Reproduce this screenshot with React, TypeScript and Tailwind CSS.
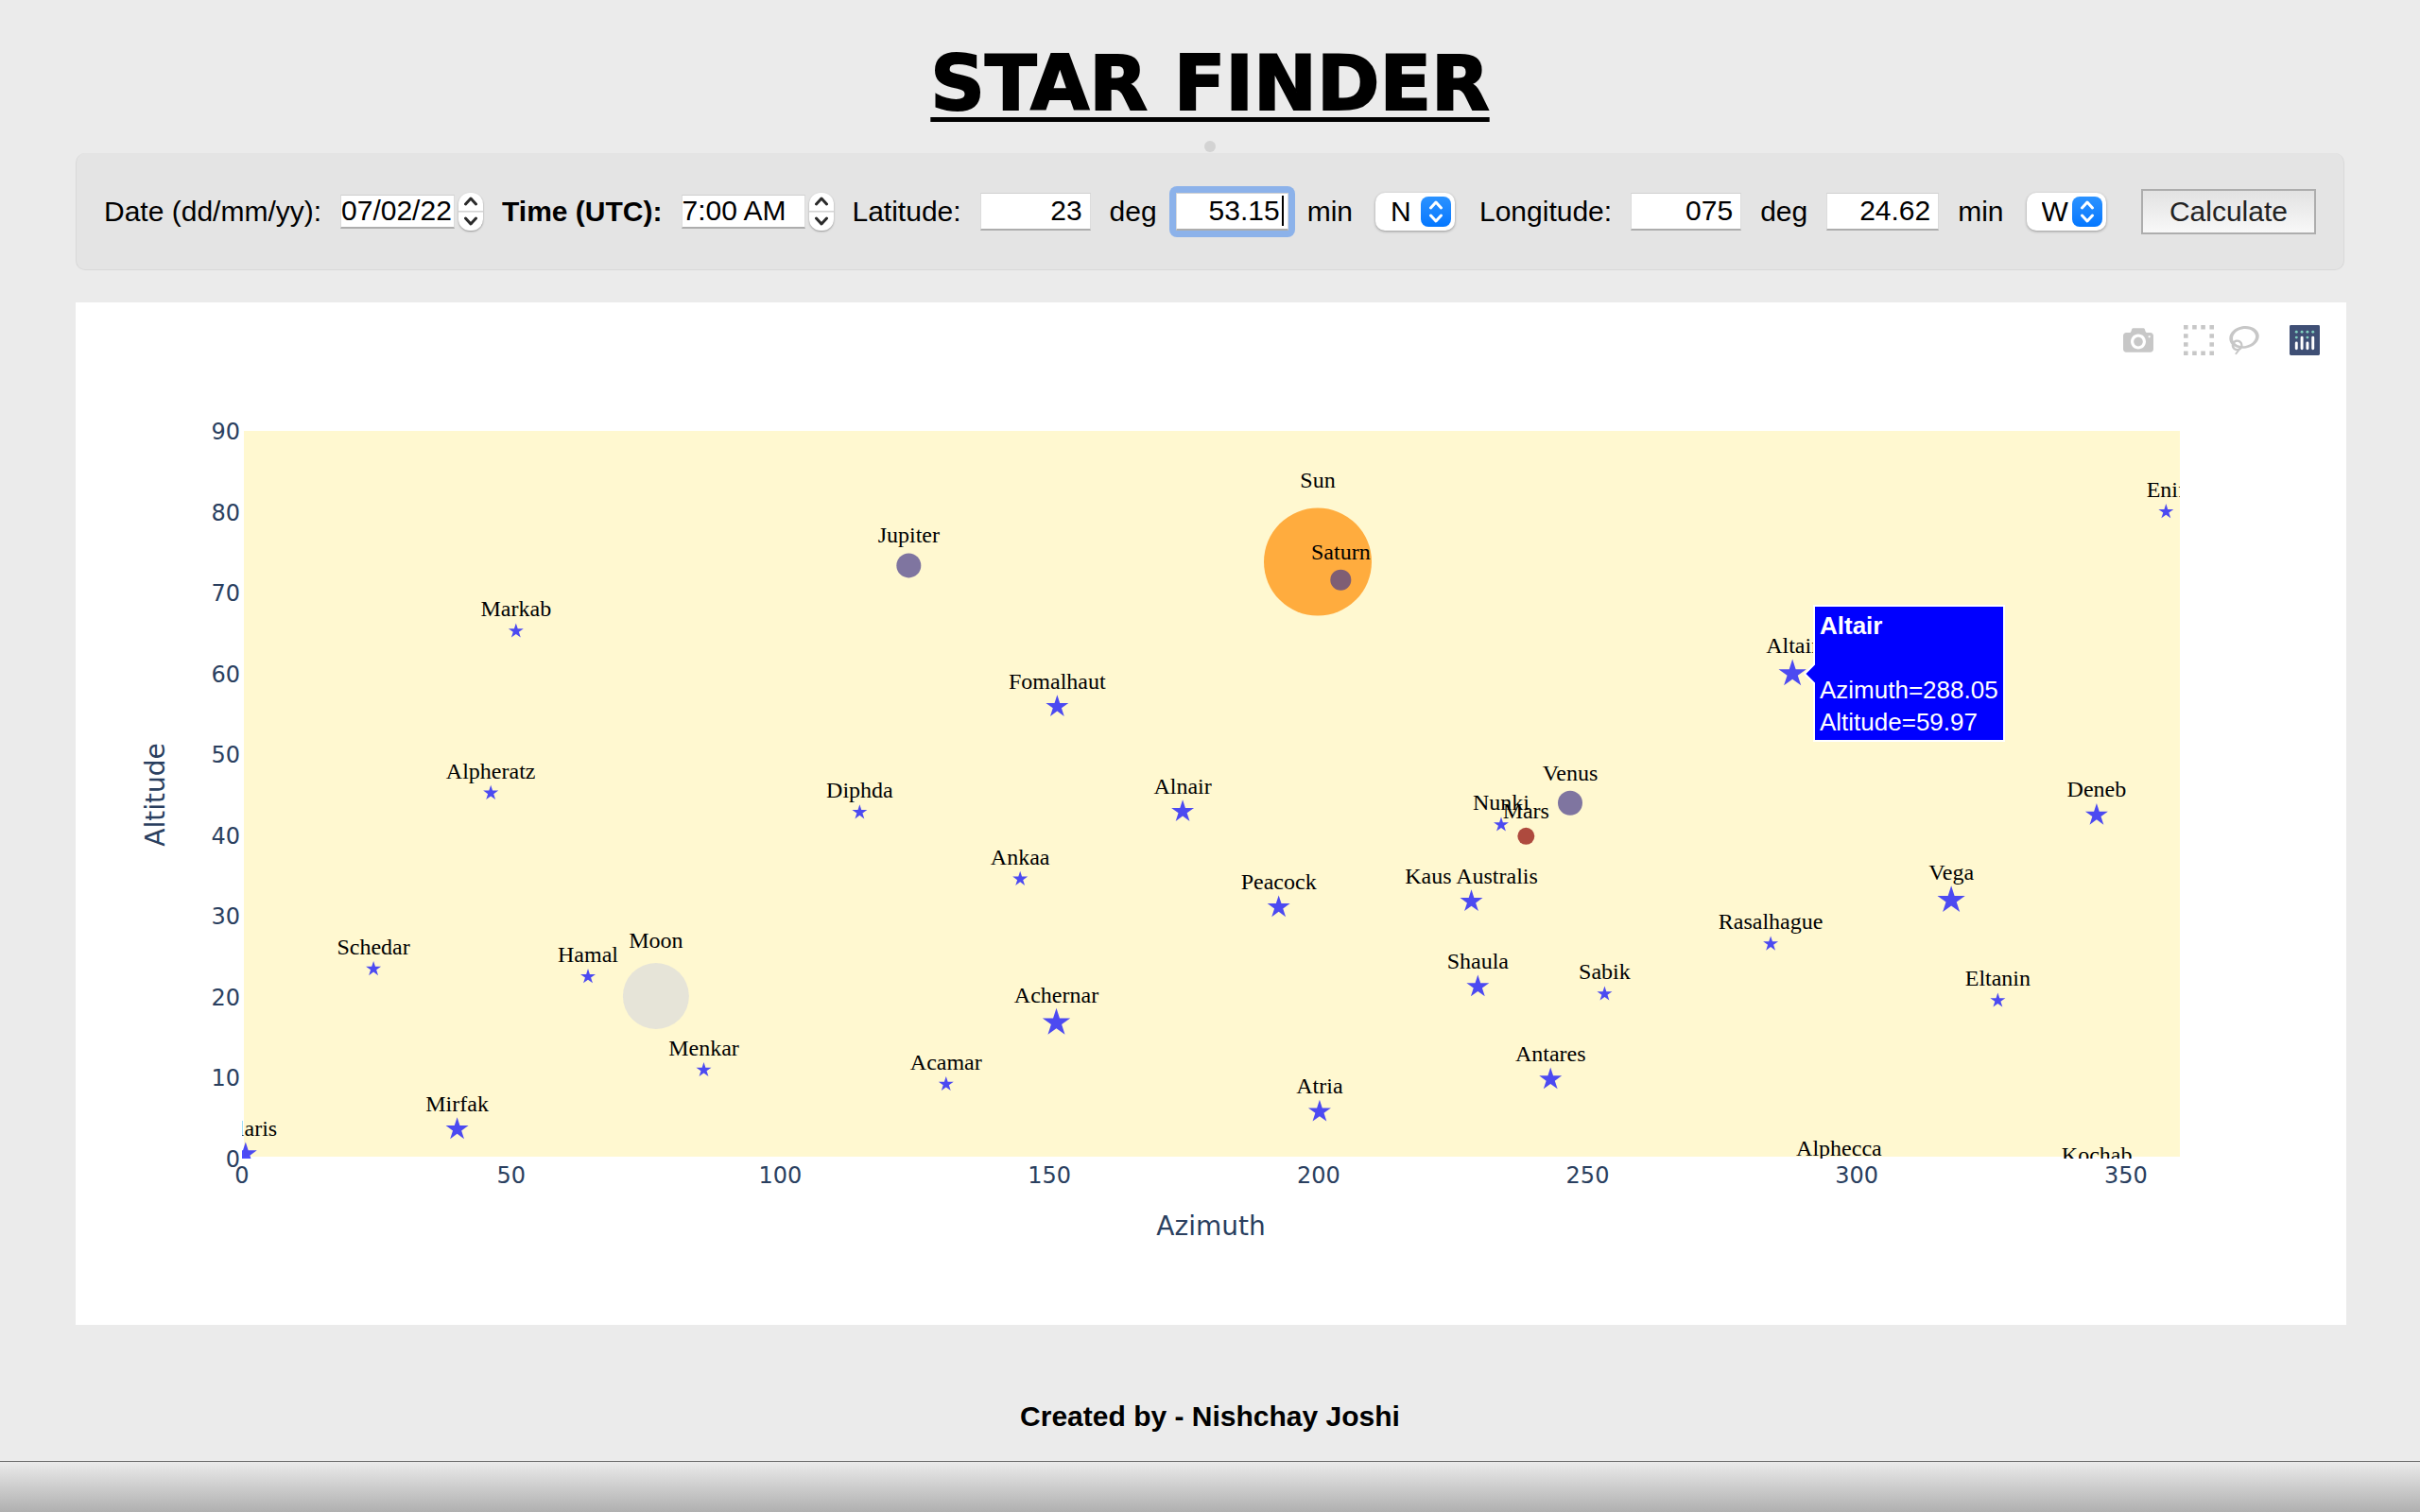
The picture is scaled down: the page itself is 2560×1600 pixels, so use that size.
import React from "react";

type Kind = "small" | "mid" | "large";

const STAR_RADIUS: Record<Kind, number> = { small: 6, mid: 9, large: 11 };

const stars: { name: string; az: number; alt: number; kind: Kind }[] = [
  { name: "Polaris", az: 0.67, alt: 0.56, kind: "mid" },
  { name: "Schedar", az: 24.43, alt: 23.45, kind: "small" },
  { name: "Mirfak", az: 39.97, alt: 3.63, kind: "mid" },
  { name: "Alpheratz", az: 46.22, alt: 45.21, kind: "small" },
  { name: "Markab", az: 50.9, alt: 65.24, kind: "small" },
  { name: "Hamal", az: 64.28, alt: 22.5, kind: "small" },
  { name: "Menkar", az: 85.79, alt: 10.95, kind: "small" },
  { name: "Diphda", az: 114.75, alt: 42.82, kind: "small" },
  { name: "Acamar", az: 130.8, alt: 9.2, kind: "small" },
  { name: "Ankaa", az: 144.57, alt: 34.58, kind: "small" },
  { name: "Achernar", az: 151.3, alt: 16.8, kind: "large" },
  { name: "Fomalhaut", az: 151.45, alt: 55.89, kind: "mid" },
  { name: "Alnair", az: 174.76, alt: 42.92, kind: "mid" },
  { name: "Peacock", az: 192.6, alt: 31.09, kind: "mid" },
  { name: "Atria", az: 200.2, alt: 5.8, kind: "mid" },
  { name: "Kaus Australis", az: 228.4, alt: 31.8, kind: "mid" },
  { name: "Shaula", az: 229.6, alt: 21.26, kind: "mid" },
  { name: "Nunki", az: 233.93, alt: 41.28, kind: "small" },
  { name: "Antares", az: 243.1, alt: 9.8, kind: "mid" },
  { name: "Sabik", az: 253.15, alt: 20.36, kind: "small" },
  { name: "Rasalhague", az: 284, alt: 26.55, kind: "small" },
  { name: "Altair", az: 288.05, alt: 59.97, kind: "large" },
  { name: "Alphecca", az: 296.7, alt: -1.42, kind: "small" },
  { name: "Vega", az: 317.55, alt: 31.95, kind: "large" },
  { name: "Eltanin", az: 326.2, alt: 19.54, kind: "small" },
  { name: "Deneb", az: 344.56, alt: 42.48, kind: "mid" },
  { name: "Kochab", az: 344.6, alt: -2.75, kind: "mid" },
  { name: "Enif", az: 357.45, alt: 80, kind: "small" },
];

const bodies = [
  { name: "Sun", az: 199.86, alt: 73.8, r: 57, fill: "#ff8c00" },
  { name: "Moon", az: 76.9, alt: 20.1, r: 35, fill: "#dcdcdc" },
  { name: "Jupiter", az: 123.87, alt: 73.35, r: 13, fill: "#483d8b" },
  { name: "Saturn", az: 204.13, alt: 71.57, r: 11, fill: "#483d8b" },
  { name: "Mars", az: 238.55, alt: 39.88, r: 9, fill: "#8b0000" },
  { name: "Venus", az: 246.75, alt: 43.98, r: 13, fill: "#483d8b" },
];

// Chart space: 2402 x 1082 units, origin at the panel's top left corner.
const toX = (az: number) => 176 + az * 5.694;
const toY = (alt: number) => 906 - alt * 8.556;
const labelLift = (r: number) => r * 1.23 + 8;

function starPoints(cx: number, cy: number, r: number) {
  const outer = r * 1.4;
  const inner = outer * 0.382;
  return Array.from({ length: 10 }, (_, i) => {
    const rad = i % 2 === 0 ? outer : inner;
    const a = (Math.PI / 5) * i - Math.PI / 2;
    return `${(cx + rad * Math.cos(a)).toFixed(2)},${(cy + rad * Math.sin(a)).toFixed(2)}`;
  }).join(" ");
}

function SkyChart() {
  const altTicks = [0, 10, 20, 30, 40, 50, 60, 70, 80, 90];
  const azTicks = [0, 50, 100, 150, 200, 250, 300, 350];
  return (
    <svg viewBox="0 0 2402 1082" className="block w-full" role="img" aria-label="Altitude against azimuth">
      <defs>
        <clipPath id="plot-area">
          <rect x="176" y="136" width="2050" height="770" />
        </clipPath>
      </defs>
      <rect x="178" y="136" width="2048" height="768" fill="#fff8d0" />
      <g className="fill-[#2a3f5f] font-['DejaVu_Sans',sans-serif] text-[24px]">
        {altTicks.map((t) => (
          <text key={t} x="174" y={toY(t) + 9} textAnchor="end">{t}</text>
        ))}
        {azTicks.map((t) => (
          <text key={t} x={toX(t)} y="932" textAnchor="middle">{t}</text>
        ))}
      </g>
      <g className="fill-[#2a3f5f] font-['DejaVu_Sans',sans-serif] text-[28px]">
        <text x="1201" y="987" textAnchor="middle">Azimuth</text>
        <text transform="translate(94 521) rotate(-90)" textAnchor="middle">Altitude</text>
      </g>
      <g clipPath="url(#plot-area)">
        {bodies.map((b) => (
          <circle key={b.name} cx={toX(b.az)} cy={toY(b.alt)} r={b.r} fill={b.fill} opacity="0.7" />
        ))}
        {stars.map((s) => (
          <polygon key={s.name} points={starPoints(toX(s.az), toY(s.alt), STAR_RADIUS[s.kind])} fill="#0000ff" opacity="0.7" />
        ))}
        <g className="fill-black font-['Liberation_Serif',serif] text-[24px]">
          {bodies.map((b) => (
            <text key={b.name} x={toX(b.az)} y={toY(b.alt) - labelLift(b.r)} textAnchor="middle">{b.name}</text>
          ))}
          {stars.map((s) => (
            <text key={s.name} x={toX(s.az)} y={toY(s.alt) - labelLift(STAR_RADIUS[s.kind])} textAnchor="middle">{s.name}</text>
          ))}
        </g>
      </g>
      <g className="font-['Liberation_Sans',sans-serif] text-[26px]">
        <path d="M1829 393l10-10v-62h201v143h-201v-61z" fill="#0000ff" stroke="#ffffff" strokeWidth="2" />
        <g fill="#ffffff">
          <text x="1845" y="351" className="font-bold">Altair</text>
          <text x="1845" y="419">Azimuth=288.05</text>
          <text x="1845" y="453">Altitude=59.97</text>
        </g>
      </g>
    </svg>
  );
}

const CAMERA =
  "m500 450c-83 0-150-67-150-150 0-83 67-150 150-150 83 0 150 67 150 150 0 83-67 150-150 150z m400 150h-120c-16 0-34 13-39 29l-31 93c-6 15-23 28-40 28h-340c-16 0-34-13-39-28l-31-94c-6-15-23-28-40-28h-120c-55 0-100-45-100-100v-450c0-55 45-100 100-100h800c55 0 100 45 100 100v450c0 55-45 100-100 100z m-400-550c-138 0-250 112-250 250 0 138 112 250 250 250 138 0 250-112 250-250 0-138-112-250-250-250z m365 380c-19 0-35 16-35 35 0 19 16 35 35 35 19 0 35-16 35-35 0-19-16-35-35-35z";
const BOX =
  "m0 850l0-143 143 0 0 143-143 0z m286 0l0-143 143 0 0 143-143 0z m285 0l0-143 143 0 0 143-143 0z m286 0l0-143 143 0 0 143-143 0z m-857-286l0-143 143 0 0 143-143 0z m857 0l0-143 143 0 0 143-143 0z m-857-285l0-143 143 0 0 143-143 0z m857 0l0-143 143 0 0 143-143 0z m-857-286l0-143 143 0 0 143-143 0z m286 0l0-143 143 0 0 143-143 0z m285 0l0-143 143 0 0 143-143 0z m286 0l0-143 143 0 0 143-143 0z";
const LASSO =
  "m1018 538c-36 207-290 336-568 286-277-48-473-256-436-463 10-57 36-108 76-151-13-66 11-137 68-183 34-28 75-41 114-42l-55-70 0 0c-2-1-3-2-4-3-10-14-8-34 5-45 14-11 34-8 45 4 1 1 2 3 2 5l0 0 113 140c16 11 31 24 45 40 4 3 6 7 8 11 48-3 100 0 151 9 278 48 473 255 436 462z m-624-379c-80 14-149 48-197 96 42 42 109 47 156 9 33-26 47-66 41-105z m-187-74c-19 16-33 37-39 60 50-32 109-55 174-68-42-25-95-24-135 8z m360 75c-34-7-69-9-102-8 8 62-16 128-68 170-73 59-175 54-244-5-9 20-16 40-20 61-28 159 121 317 333 354s407-60 434-217c28-159-121-318-333-355z";

function ModeButton({ label, d, width = 1000 }: { label: string; d: string; width?: number }) {
  return (
    <button type="button" aria-label={label} className="size-8">
      <svg viewBox={`0 0 ${width} 1000`} className="size-8 fill-[#c7c7c7]">
        <path transform="matrix(1 0 0 -1 0 850)" d={d} />
      </svg>
    </button>
  );
}

function ModeBar() {
  return (
    <div className="absolute top-6 right-7 flex">
      <ModeButton label="Download plot as a png" d={CAMERA} />
      <div className="ml-8 flex gap-4">
        <ModeButton label="Box Select" d={BOX} />
        <ModeButton label="Lasso Select" d={LASSO} width={1031} />
      </div>
      <a href="#plotly" aria-label="Produced with Plotly" className="ml-8 size-8">
        <svg viewBox="0 0 132 132" className="size-8">
          <rect width="132" height="132" rx="6" fill="#3f4f75" />
          <g fill="#80cfbe">
            <circle cx="30" cy="30" r="6" />
            <circle cx="54" cy="30" r="6" />
            <circle cx="78" cy="30" r="6" />
            <circle cx="102" cy="30" r="6" />
            <circle cx="30" cy="54" r="6" />
            <circle cx="78" cy="54" r="6" />
          </g>
          <g fill="#ffffff">
            <rect x="24" y="72" width="12" height="36" rx="6" />
            <rect x="48" y="48" width="12" height="60" rx="6" />
            <rect x="72" y="72" width="12" height="36" rx="6" />
            <rect x="96" y="48" width="12" height="60" rx="6" />
          </g>
        </svg>
      </a>
    </div>
  );
}

function Chevron({ down = false, className }: { down?: boolean; className: string }) {
  return (
    <svg viewBox="0 0 16 10" className={className} fill="none" strokeWidth="3" strokeLinecap="round" strokeLinejoin="round">
      <path d={down ? "M2.500 2l5.500 6 5.500-6" : "M2.500 8l5.500-6 5.500 6"} />
    </svg>
  );
}

function Stepper({ name }: { name: string }) {
  return (
    <span className="flex h-10 w-[26px] shrink-0 flex-col overflow-hidden rounded-[12px] bg-white shadow-[0_1px_2px_rgba(0,0,0,0.35)]">
      <button type="button" aria-label={`Increase ${name}`} className="flex flex-1 items-center justify-center border-b border-[#d4d4d4]">
        <Chevron className="w-4 stroke-[#2b2b2b]" />
      </button>
      <button type="button" aria-label={`Decrease ${name}`} className="flex flex-1 items-center justify-center border-t border-[#e6e6e6]">
        <Chevron down className="w-4 stroke-[#2b2b2b]" />
      </button>
    </span>
  );
}

const field = "border border-t-[#cfcfcf] border-b-2 border-x-[#dcdcdc] border-b-[#adadad] bg-white outline-none";

function SteppedField({ id, label, value, bold = false, width, name }: { id: string; label: string; value: string; bold?: boolean; width: string; name: string }) {
  return (
    <div className="flex items-center gap-5">
      <label htmlFor={id} className={bold ? "font-bold" : ""}>{label}</label>
      <span className="flex items-center gap-1">
        <input id={id} defaultValue={value} className={`${field} ${width} h-9`} />
        <Stepper name={name} />
      </span>
    </div>
  );
}

function Hemisphere({ id, label, options }: { id: string; label: string; options: string[] }) {
  return (
    <span className="relative mr-1.5 ml-1 flex">
      <select id={id} aria-label={label} className="h-10 w-[84px] appearance-none rounded-[10px] bg-white pl-4 leading-9 shadow-[0_1px_3px_rgba(0,0,0,0.35)] outline-none">
        {options.map((o) => (
          <option key={o}>{o}</option>
        ))}
      </select>
      <span className="pointer-events-none absolute top-1 right-1 flex h-8 w-8 flex-col items-center justify-center gap-1 rounded-lg bg-linear-to-b from-[#2a92ff] to-[#0377ff]">
        <Chevron className="w-4 stroke-white" />
        <Chevron down className="w-4 stroke-white" />
      </span>
    </span>
  );
}

function Toolbar() {
  return (
    <form
      onSubmit={(e) => e.preventDefault()}
      className="flex h-[124px] items-center gap-5 rounded-[10px] border border-t-0 border-[#d9d9d9] bg-[#e4e4e4] px-[29px] text-[30px] leading-9 whitespace-nowrap text-black"
    >
      <SteppedField id="date" name="date" label="Date (dd/mm/yy):" value="07/02/22" width="w-[121px]" />
      <SteppedField id="time" name="time" label="Time (UTC):" value="7:00 AM" bold width="w-[131px]" />
      <label htmlFor="lat-deg">Latitude:</label>
      <input id="lat-deg" defaultValue="23" className={`${field} h-10 w-[117px] pr-2 text-right`} />
      <label htmlFor="lat-deg">deg</label>
      <span className="relative -m-[7px] flex rounded-lg bg-[#8cb2ea] p-[7px]">
        <input id="lat-min" defaultValue="53.15" className={`${field} h-10 w-[119px] pr-2 text-right`} />
        <span className="absolute top-2.5 right-3 h-8 w-0.5 bg-black" />
      </span>
      <label htmlFor="lat-min">min</label>
      <Hemisphere id="lat-hemi" label="Latitude hemisphere" options={["N", "S"]} />
      <label htmlFor="lon-deg">Longitude:</label>
      <input id="lon-deg" defaultValue="075" className={`${field} h-10 w-[117px] pr-2 text-right`} />
      <label htmlFor="lon-deg">deg</label>
      <input id="lon-min" defaultValue="24.62" className={`${field} h-10 w-[119px] pr-2 text-right`} />
      <label htmlFor="lon-min">min</label>
      <Hemisphere id="lon-hemi" label="Longitude hemisphere" options={["W", "E"]} />
      <button type="submit" className="ml-auto h-12 border-2 border-[#adadad] bg-linear-to-b from-[#e2e2e2] to-[#f8f8f8] px-7 text-[#222222]">
        Calculate
      </button>
    </form>
  );
}

export default function App() {
  return (
    <div className="flex min-h-screen flex-col bg-[#ebebeb] font-['Liberation_Sans',Arial,sans-serif]">
      <header className="flex h-[162px] flex-col items-center justify-end">
        <h1 className="font-['DejaVu_Sans',sans-serif] text-[80px] leading-[96px] font-bold text-black underline decoration-[5px] underline-offset-[8px] [-webkit-text-stroke:2px_black]">
          STAR FINDER
        </h1>
        <span className="mt-3 mb-px size-3 rounded-full bg-[#d3d3d3]" />
      </header>
      <main className="flex flex-col gap-[34px] px-20">
        <Toolbar />
        <section className="relative -mr-0.5 bg-white">
          <SkyChart />
          <ModeBar />
        </section>
      </main>
      <footer className="flex flex-1 flex-col">
        <p className="flex flex-1 items-center justify-center pt-[50px] text-[30px] leading-9 font-bold text-black">
          Created by - Nishchay Joshi
        </p>
        <div className="h-[54px] border-t border-[#6b6b6b] bg-linear-to-b from-[#ebebeb] to-[#b0b0b0]" />
      </footer>
    </div>
  );
}
